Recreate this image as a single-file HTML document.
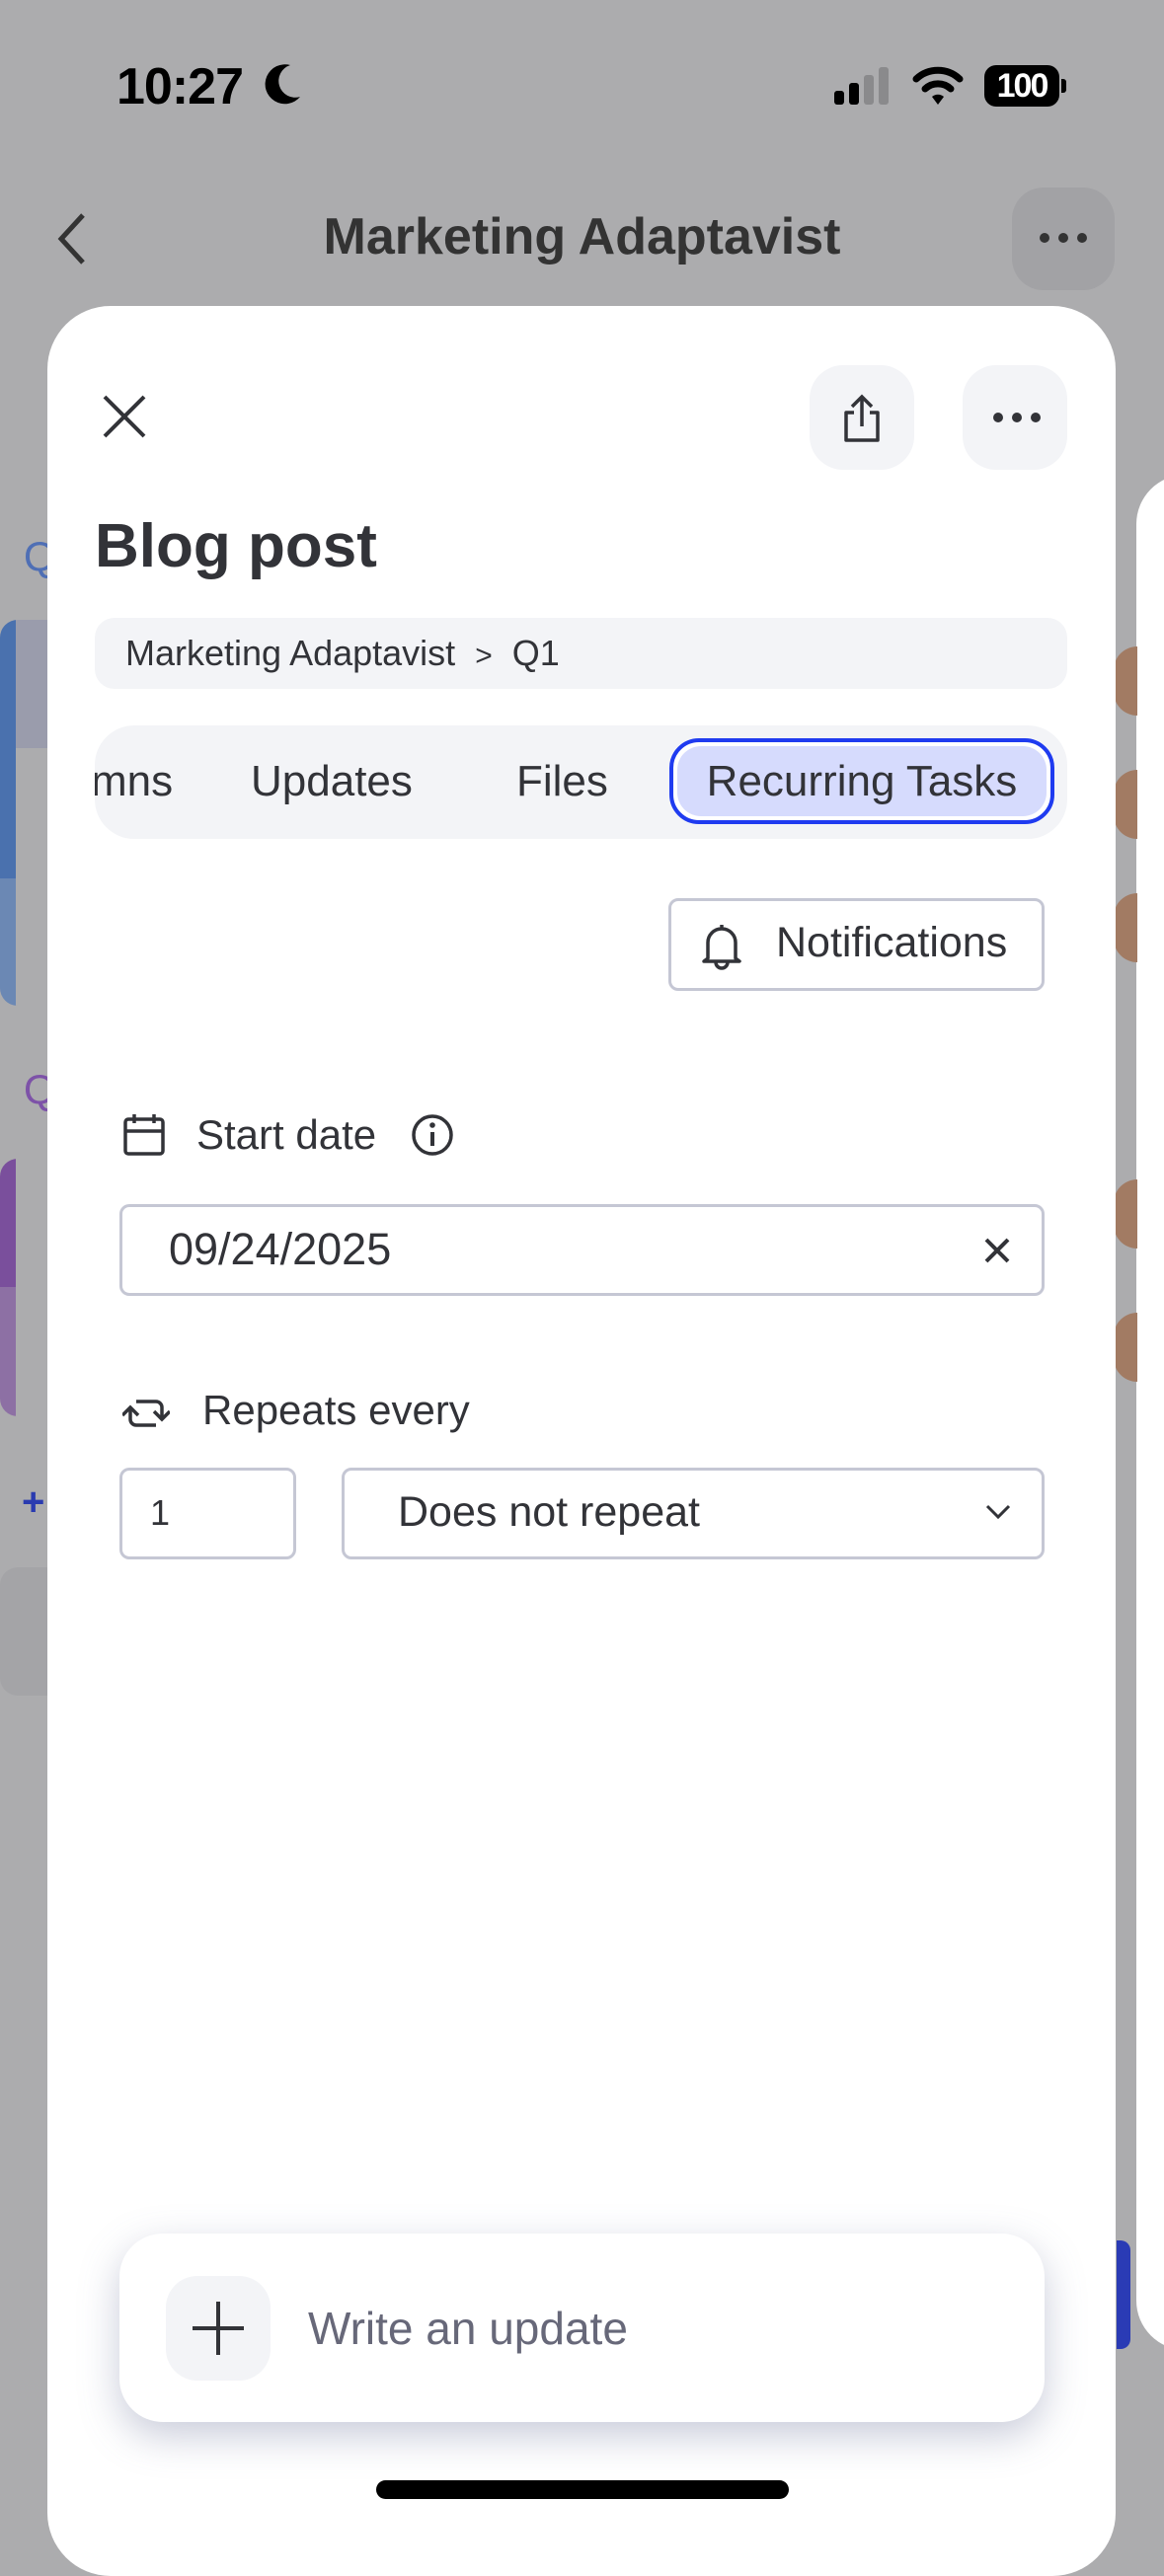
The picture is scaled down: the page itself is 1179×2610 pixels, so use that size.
<!DOCTYPE html>
<html><head><meta charset="utf-8"><style>
*{margin:0;padding:0;box-sizing:border-box}
body{width:1179px;height:2556px;position:relative;overflow:hidden;background:#acacae;font-family:"Liberation Sans",sans-serif;color:#323338}
.abs{position:absolute}
.btn{background:#f3f4f7;border-radius:34px}
.inp{border:3px solid #c5c7d4;border-radius:10px;background:#fff}
</style></head><body>
<!-- status bar -->
<div class="abs" style="left:118px;top:58px;font-size:52px;font-weight:bold;color:#000;letter-spacing:-1px">10:27</div>
<svg class="abs" style="left:268px;top:62px" width="40" height="44" viewBox="0 0 40 44"><path d="M26 4 A20 20 0 1 0 36 36 A16 16 0 0 1 26 4Z" fill="#000"/></svg>
<svg class="abs" style="left:845px;top:68px" width="60" height="40"><rect x="0" y="24" width="10" height="14" rx="3" fill="#000"/><rect x="15" y="16" width="10" height="22" rx="3" fill="#000"/><rect x="30" y="8" width="10" height="30" rx="3" fill="#8a8a8c"/><rect x="45" y="0" width="10" height="38" rx="3" fill="#8a8a8c"/></svg>
<svg class="abs" style="left:924px;top:66px" width="52" height="42" viewBox="0 0 52 42"><path d="M4 14 A32 32 0 0 1 48 14" stroke="#000" stroke-width="7" fill="none" stroke-linecap="round"/><path d="M13 24 A19 19 0 0 1 39 24" stroke="#000" stroke-width="7" fill="none" stroke-linecap="round"/><path d="M20 32 L26 40 L32 32 A9 9 0 0 0 20 32Z" fill="#000"/></svg>
<div class="abs" style="left:997px;top:66px;width:76px;height:42px;background:#000;border-radius:12px;color:#fff;font-weight:bold;font-size:34px;text-align:center;line-height:42px;letter-spacing:-2px">100</div>
<div class="abs" style="left:1075px;top:80px;width:5px;height:14px;background:#000;border-radius:0 3px 3px 0"></div>
<!-- header -->
<svg class="abs" style="left:54px;top:214px" width="36" height="56"><path d="M30 4 L8 28 L30 52" stroke="#333" stroke-width="5" fill="none"/></svg>
<div class="abs" style="left:0;width:1179px;top:210px;text-align:center;font-size:52px;font-weight:bold;color:#333">Marketing Adaptavist</div>
<div class="abs" style="left:1025px;top:190px;width:104px;height:104px;background:#a2a2a5;border-radius:32px"></div>
<div class="abs" style="left:1053px;top:236px;width:50px;font-size:0">
<span style="display:inline-block;width:10px;height:10px;border-radius:5px;background:#333;margin-right:9px"></span><span style="display:inline-block;width:10px;height:10px;border-radius:5px;background:#333;margin-right:9px"></span><span style="display:inline-block;width:10px;height:10px;border-radius:5px;background:#333"></span></div>
<!-- background board -->
<div class="abs" style="left:24px;top:540px;font-size:42px;color:#4f6fb5">Q</div>
<div class="abs" style="left:24px;top:1080px;font-size:42px;color:#7d52a8">Q</div>
<div class="abs" style="left:0;top:628px;width:60px;height:391px;background:#9a9cac;border-radius:18px 0 0 18px;overflow:hidden">
<div style="position:absolute;left:0;top:0;width:16px;height:262px;background:#4a71ae"></div>
<div style="position:absolute;left:0;top:262px;width:16px;height:129px;background:#6b88b4"></div>
<div style="position:absolute;left:16px;top:130px;width:50px;height:261px;background:#acacae"></div>
</div>
<div class="abs" style="left:0;top:1174px;width:60px;height:261px;background:#acacae;border-radius:18px 0 0 18px;overflow:hidden">
<div style="position:absolute;left:0;top:0;width:16px;height:130px;background:#7a4f9c"></div>
<div style="position:absolute;left:0;top:130px;width:16px;height:131px;background:#8d70a4"></div>
</div>
<div class="abs" style="left:22px;top:1500px;font-size:40px;color:#2a3bb0;font-weight:bold">+</div>
<div class="abs" style="left:0;top:1588px;width:60px;height:130px;background:#a4a4a7;border-radius:18px 0 0 18px"></div>
<!-- right side -->
<div class="abs" style="left:1151px;top:481px;width:60px;height:1900px;background:#fff;border-radius:50px 0 0 50px"></div>
<div class="abs" style="left:1131px;top:2270px;width:14px;height:110px;background:#2a3bb5;border-radius:0 10px 10px 0"></div>
<div class="abs" style="left:1128px;top:655px;width:24px;height:70px;background:#a27b63;border-radius:30px 0 0 30px"></div>
<div class="abs" style="left:1128px;top:780px;width:24px;height:70px;background:#a27b63;border-radius:30px 0 0 30px"></div>
<div class="abs" style="left:1128px;top:905px;width:24px;height:70px;background:#a27b63;border-radius:30px 0 0 30px"></div>
<div class="abs" style="left:1128px;top:1195px;width:24px;height:70px;background:#a27b63;border-radius:30px 0 0 30px"></div>
<div class="abs" style="left:1128px;top:1330px;width:24px;height:70px;background:#a27b63;border-radius:30px 0 0 30px"></div>
<!-- sheet -->
<div class="abs" style="left:48px;top:310px;width:1082px;height:2300px;background:#fff;border-radius:64px"></div>
<svg class="abs" style="left:102px;top:398px" width="48" height="48"><path d="M4 4 L44 44 M44 4 L4 44" stroke="#323338" stroke-width="4"/></svg>
<div class="abs btn" style="left:820px;top:370px;width:106px;height:106px"></div>
<svg class="abs" style="left:849px;top:398px" width="48" height="52" viewBox="0 0 48 52"><path d="M24 34 V4 M14 14 L24 4 L34 14" stroke="#323338" stroke-width="3.5" fill="none"/><path d="M16 20 H8 V48 H40 V20 H32" stroke="#323338" stroke-width="3.5" fill="none" stroke-linejoin="round"/></svg>
<div class="abs btn" style="left:975px;top:370px;width:106px;height:106px"></div>
<div class="abs" style="left:1006px;top:418px;font-size:0">
<span style="display:inline-block;width:10px;height:10px;border-radius:5px;background:#323338;margin-right:9px"></span><span style="display:inline-block;width:10px;height:10px;border-radius:5px;background:#323338;margin-right:9px"></span><span style="display:inline-block;width:10px;height:10px;border-radius:5px;background:#323338"></span></div>
<div class="abs" style="left:96px;top:518px;font-size:62px;font-weight:bold;color:#323338">Blog post</div>
<div class="abs" style="left:96px;top:626px;width:985px;height:72px;background:#f3f4f7;border-radius:20px"></div>
<div class="abs" style="left:127px;top:641px;font-size:36px;color:#323338">Marketing Adaptavist <span style="margin:0 10px;font-size:30px">&gt;</span> Q1</div>
<div class="abs" style="left:96px;top:735px;width:985px;height:115px;background:#f3f4f7;border-radius:40px;overflow:hidden">
<div style="position:absolute;left:-4px;top:32px;font-size:44px;color:#323338">mns</div>
<div style="position:absolute;left:158px;top:32px;font-size:44px;color:#323338">Updates</div>
<div style="position:absolute;left:427px;top:32px;font-size:44px;color:#323338">Files</div>
</div>
<div class="abs" style="left:678px;top:748px;width:390px;height:87px;border:4px solid #1f3bf0;border-radius:30px;background:#fff;padding:4px">
<div style="width:100%;height:100%;background:#d6dbfd;border-radius:24px;text-align:center;font-size:44px;line-height:71px;color:#323338;white-space:nowrap">Recurring Tasks</div></div>
<!-- notifications -->
<div class="abs inp" style="left:677px;top:910px;width:381px;height:94px"></div>
<svg class="abs" style="left:708px;top:933px" width="46" height="50" viewBox="0 0 46 50"><path d="M23 4 V8 M9 38 V22 A14 14 0 0 1 37 22 V38 L41 41 H5 Z M17 42 A6 6 0 0 0 29 42" stroke="#323338" stroke-width="3.5" fill="none" stroke-linejoin="round"/></svg>
<div class="abs" style="left:786px;top:931px;font-size:43px;color:#323338">Notifications</div>
<!-- start date -->
<svg class="abs" style="left:124px;top:1126px" width="44" height="46" viewBox="0 0 44 46"><rect x="3" y="8" width="38" height="35" rx="3" stroke="#323338" stroke-width="3.5" fill="none"/><path d="M3 20 H41 M12 3 V12 M32 3 V12" stroke="#323338" stroke-width="3.5"/></svg>
<div class="abs" style="left:199px;top:1126px;font-size:42px;color:#323338">Start date</div>
<svg class="abs" style="left:415px;top:1127px" width="46" height="46"><circle cx="23" cy="23" r="19" stroke="#323338" stroke-width="3.5" fill="none"/><path d="M23 20 V34" stroke="#323338" stroke-width="4"/><circle cx="23" cy="13" r="2.8" fill="#323338"/></svg>
<div class="abs inp" style="left:121px;top:1220px;width:937px;height:93px"></div>
<div class="abs" style="left:171px;top:1240px;font-size:45px;color:#323338">09/24/2025</div>
<svg class="abs" style="left:996px;top:1253px" width="28" height="28"><path d="M3 3 L25 25 M25 3 L3 25" stroke="#323338" stroke-width="4"/></svg>
<!-- repeats -->
<svg class="abs" style="left:124px;top:1408px" width="48" height="46" viewBox="0 0 48 46"><path d="M14 12 H34 A6 6 0 0 1 40 18 V28 M32 22 L40 30 L48 22" stroke="#323338" stroke-width="3.5" fill="none"/><path d="M34 36 H14 A6 6 0 0 1 8 30 V20 M0 26 L8 18 L16 26" stroke="#323338" stroke-width="3.5" fill="none"/></svg>
<div class="abs" style="left:205px;top:1405px;font-size:42px;color:#323338">Repeats every</div>
<div class="abs inp" style="left:121px;top:1487px;width:179px;height:93px"></div>
<div class="abs" style="left:152px;top:1512px;font-size:36px;color:#323338">1</div>
<div class="abs inp" style="left:346px;top:1487px;width:712px;height:93px"></div>
<div class="abs" style="left:403px;top:1508px;font-size:43px;color:#323338">Does not repeat</div>
<svg class="abs" style="left:998px;top:1524px" width="26" height="16"><path d="M2 2 L13 13 L24 2" stroke="#323338" stroke-width="3" fill="none"/></svg>
<!-- update bar -->
<div class="abs" style="left:121px;top:2263px;width:937px;height:191px;background:#fff;border-radius:44px;box-shadow:0 14px 40px rgba(100,110,150,0.35)"></div>
<div class="abs" style="left:168px;top:2306px;width:106px;height:106px;background:#f3f4f7;border-radius:32px"></div>
<svg class="abs" style="left:193px;top:2330px" width="56" height="58"><path d="M28 2 V56 M2 29 H54" stroke="#323338" stroke-width="4"/></svg>
<div class="abs" style="left:312px;top:2332px;font-size:46px;color:#676879">Write an update</div>
<div class="abs" style="left:381px;top:2513px;width:418px;height:19px;background:#000;border-radius:10px"></div>
</body></html>
